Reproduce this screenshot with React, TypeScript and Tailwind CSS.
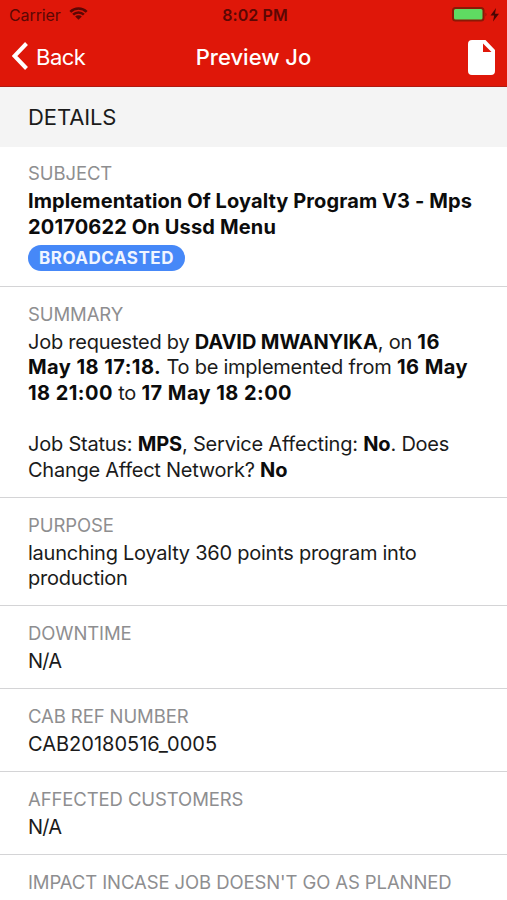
import type { ReactNode } from "react";

interface RowProps {
  label: string;
  children?: ReactNode;
}

function Row({ label, children }: RowProps) {
  return (
    <div className="border-b border-[#d4d4d6] pl-7 pr-5 pt-[14px] pb-[13.4px] first:pt-[13px] first:pb-[14.4px]">
      <p className="text-[18.5px] leading-[27px] tracking-[-0.1px] text-[#8e8e90]">
        {label}
      </p>
      <div className="mt-[2px] text-[20px] leading-[25.6px] tracking-[-0.25px] text-[#1b1b1b]">
        {children}
      </div>
    </div>
  );
}

function Strong({ children }: { children: ReactNode }) {
  return <b className="font-bold tracking-[-0.1px] text-[#0c0c0c]">{children}</b>;
}

function DateText({ children }: { children: ReactNode }) {
  return <b className="font-bold tracking-[0.45px] text-[#0c0c0c]">{children}</b>;
}

function StatusBar() {
  return (
    <div className="grid h-[29px] grid-cols-3 items-center pl-[9px] pr-1.5 text-[#5c0704]">
      <div className="flex items-center gap-2">
        <span className="text-[16px] tracking-[-0.1px]">Carrier</span>
        <svg className="-mt-0.5 h-[13px] w-[19px]" viewBox="0 0 20 14">
          <path
            d="M1.2 5.2a12.6 12.6 0 0 1 17.6 0M4.2 8.2a8.4 8.4 0 0 1 11.6 0"
            fill="none"
            stroke="currentColor"
            strokeWidth="2.8"
          />
          <path d="M10 13.7 6.4 10.2a5.2 5.2 0 0 1 7.2 0Z" fill="currentColor" />
        </svg>
      </div>
      <span className="text-center text-[16px] font-semibold tracking-[0.1px]">8:02 PM</span>
      <svg className="h-4 w-[49px] justify-self-end" viewBox="0 0 49 16">
        <rect x="1" y="1" width="30.5" height="12.5" rx="2.5" fill="#5fdb62" stroke="#8a1a06" strokeWidth="2" />
        <path d="M33.5 5.5v4q2-2 0-4Z" fill="#8a1a06" />
        <path d="M44 1 38.5 8.5h3.7L41 14.5l6-7.8h-4L44 1Z" fill="#4a0603" />
      </svg>
    </div>
  );
}

function NavBar() {
  return (
    <div className="grid h-[57px] grid-cols-[1fr_auto_1fr] items-center px-3 text-white">
      <button className="flex items-center gap-2">
        <svg className="-mt-1 h-7 w-4" viewBox="0 0 16 28">
          <path d="M14.5 1.5 2.5 14l12 12.5" fill="none" stroke="currentColor" strokeWidth="4" />
        </svg>
        <span className="text-[22px] tracking-[-0.5px]">Back</span>
      </button>
      <h1 className="text-[22px] font-medium">Preview Jo</h1>
      <svg className="h-[35px] w-[27px] justify-self-end" viewBox="0 0 27 35">
        <path
          fillRule="evenodd"
          fill="currentColor"
          d="M4 0h13.5L27 10V31a4 4 0 0 1-4 4H4a4 4 0 0 1-4-4V4a4 4 0 0 1 4-4Zm11 3.5V12h8.5Z"
        />
      </svg>
    </div>
  );
}

export default function App() {
  return (
    <div className="h-[900px] w-[507px] overflow-hidden bg-white font-['Inter',sans-serif]">
      <header className="border-b border-[#b01a12] bg-[#df1709]">
        <StatusBar />
        <NavBar />
      </header>

      <div className="flex h-[60px] items-center bg-[#f4f4f4] px-7">
        <h2 className="text-[22px] tracking-[-0.1px] text-[#1b1b1b]">DETAILS</h2>
      </div>

      <main>
        <Row label="SUBJECT">
          <p className="font-bold tracking-[0.1px] text-[#0c0c0c]">
            Implementation Of Loyalty Program V3 - Mps
            <br />
            <span className="tracking-[0.15px]">20170622 On Ussd Menu</span>
          </p>
          <span className="mt-[5px] flex h-[26px] w-[157px] items-center justify-center rounded-full bg-[#4688f8] pt-px text-[17px] font-bold tracking-[0.5px] text-[#f0f5ff]">
            BROADCASTED
          </span>
        </Row>
        <Row label="SUMMARY">
          <p>
            Job requested by <Strong>DAVID MWANYIKA</Strong>, on{" "}
            <DateText>
              16
              <br />
              May 18 17:18.
            </DateText>{" "}
            To be implemented from{" "}
            <DateText>
              16 May
              <br />
              18 21:00
            </DateText>{" "}
            to <DateText>17 May 18 2:00</DateText>
          </p>
          <br />
          <p>
            <span className="tracking-[-0.22px]">
              Job Status: <Strong>MPS</Strong>, Service Affecting:{" "}
              <Strong>No</Strong>. Does
            </span>
            <br />
            Change Affect Network? <Strong>No</Strong>
          </p>
        </Row>
        <Row label="PURPOSE">
          launching Loyalty 360 points program into
          <br />
          production
        </Row>
        <Row label="DOWNTIME">
          <span className="tracking-[-0.8px]">N/A</span>
        </Row>
        <Row label="CAB REF NUMBER">
          <span className="tracking-[0px]">CAB20180516_0005</span>
        </Row>
        <Row label="AFFECTED CUSTOMERS">
          <span className="tracking-[-0.8px]">N/A</span>
        </Row>
        <Row label="IMPACT INCASE JOB DOESN'T GO AS PLANNED" />
      </main>
    </div>
  );
}
